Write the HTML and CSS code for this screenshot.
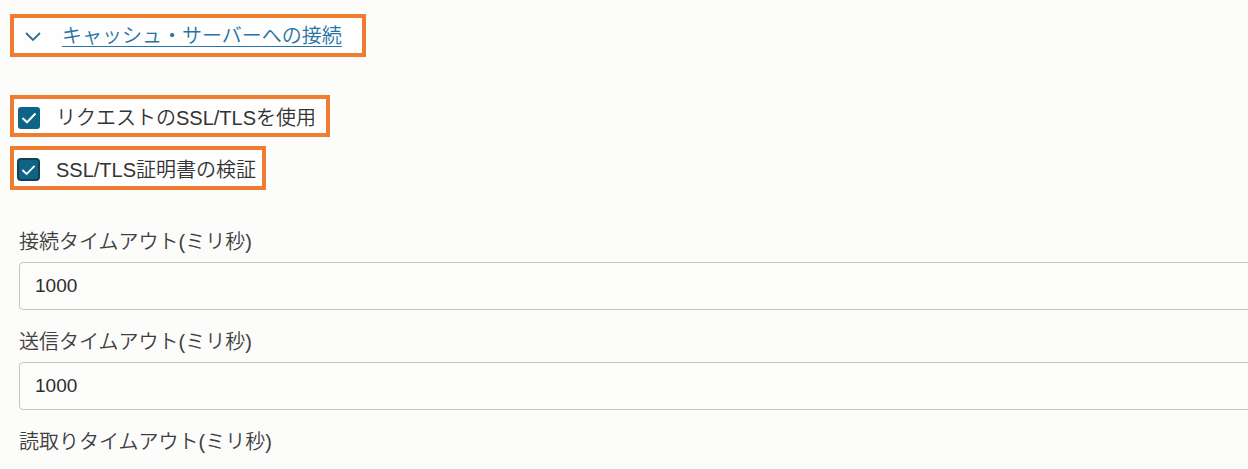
FILE: index.html
```html
<!DOCTYPE html>
<html lang="ja">
<head>
<meta charset="utf-8">
<title>キャッシュ・サーバーへの接続</title>
<link rel="stylesheet" href="styles.css">
</head>
<body>
<div class="page">
  <div class="section-head">
    <svg class="chevron" width="16" height="9" viewBox="0 0 16 9"><path d="M1 1 L8 8 L15 1" fill="none" stroke="#2b6f93" stroke-width="1.8"/></svg>
    <a class="section-link" href="#">キャッシュ・サーバーへの接続</a>
  </div>

  <div class="checks">
    <label class="check-row row-ssl">
      <span class="box"><svg width="16" height="12" viewBox="0 0 16 12"><path d="M1.5 6 L6 10.3 L14.5 1.5" fill="none" stroke="#fff" stroke-width="2"/></svg></span>
      <span class="check-text">リクエストのSSL/TLSを使用</span>
    </label>
    <label class="check-row row-verify">
      <span class="box box-focus"><svg width="15" height="12" viewBox="0 0 16 12"><path d="M1.5 6 L6 10.3 L14.5 1.5" fill="none" stroke="#fff" stroke-width="2"/></svg></span>
      <span class="check-text">SSL/TLS証明書の検証</span>
    </label>
  </div>

  <div class="fields">
    <div class="field">
      <div class="field-label">接続タイムアウト(ミリ秒)</div>
      <div class="input">1000</div>
    </div>
    <div class="field">
      <div class="field-label">送信タイムアウト(ミリ秒)</div>
      <div class="input">1000</div>
    </div>
    <div class="field">
      <div class="field-label">読取りタイムアウト(ミリ秒)</div>
    </div>
  </div>
</div>
</body>
</html>
```

FILE: styles.css
```css
html, body {
  margin: 0;
  padding: 0;
}
body {
  background: #fcfcfb;
  font-family: "Liberation Sans", "Noto Sans CJK JP", sans-serif;
  color: #3a3a3a;
  overflow: hidden;
  height: 469px;
}
.page {
  padding-left: 10px;
  padding-top: 14px;
}
.section-head {
  box-sizing: border-box;
  width: 356px;
  height: 43px;
  border: 4px solid #ee7d31;
  background: #fefefe;
  display: flex;
  align-items: center;
  padding-left: 11px;
  gap: 21px;
}
.chevron {
  display: block;
  margin-top: 1px;
}
.section-link {
  font-size: 20px;
  line-height: 24px;
  font-weight: 350;
  color: #2874a4;
  text-decoration: underline;
  text-underline-offset: 3px;
  text-decoration-thickness: 1px;
}
.checks {
  margin-top: 38px;
  display: flex;
  flex-direction: column;
  align-items: flex-start;
  gap: 9px;
}
.check-row {
  box-sizing: border-box;
  border: 4px solid #ee7d31;
  background: #fefefe;
  display: flex;
  align-items: center;
  padding-top: 3px;
  gap: 16px;
}
.row-ssl {
  width: 320px;
  height: 42px;
  padding-left: 4px;
}
.row-verify {
  width: 256px;
  height: 44px;
  padding-left: 3px;
}
.box {
  box-sizing: border-box;
  width: 22px;
  height: 22px;
  border-radius: 3px;
  background: #0d6486;
  display: flex;
  align-items: center;
  justify-content: center;
}
.box-focus {
  width: 23px;
  height: 23px;
  border: 2px solid #173f52;
  border-radius: 4px;
}
.check-text {
  font-size: 20px;
  line-height: 24px;
  font-weight: 350;
  color: #333;
}
.fields {
  margin-top: 40px;
  padding-left: 9px;
  display: flex;
  flex-direction: column;
  gap: 20px;
}
.field-label {
  font-size: 20px;
  line-height: 24px;
  font-weight: 350;
  color: #404040;
  margin-bottom: 8px;
}
.input {
  box-sizing: border-box;
  width: calc(100% + 40px);
  height: 48px;
  border: 1px solid #c7c5c3;
  border-radius: 4px;
  background: #fdfdfc;
  padding-left: 15px;
  font-size: 19px;
  line-height: 46px;
  color: #2c2c2c;
}
```
